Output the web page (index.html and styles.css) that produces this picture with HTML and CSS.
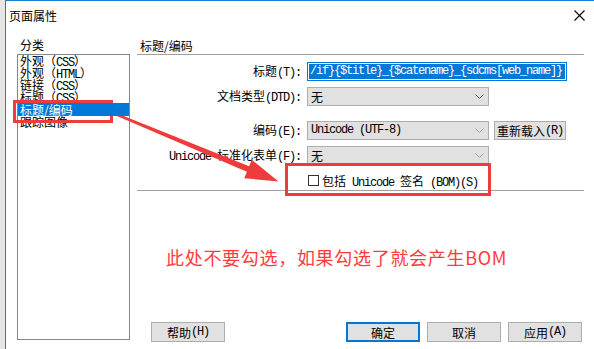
FILE: index.html
```html
<!DOCTYPE html>
<html lang="zh-CN">
<head>
<meta charset="utf-8">
<title>页面属性</title>
<link rel="stylesheet" href="styles.css">
</head>
<body>
<div class="screen">
  <div class="dialog">
    <div class="titlebar">
      <span class="title">页面属性</span>
      <svg class="close" width="11" height="11" viewBox="0 0 11 11"><path d="M0.5 0.5 L10.5 10.5 M10.5 0.5 L0.5 10.5" stroke="#000" stroke-width="1.1" fill="none"/></svg>
    </div>
    <div class="main">
      <div class="cat">
        <div class="cat-label">分类</div>
        <ul class="list">
          <li>外观（<span class="en">CSS</span>）</li>
          <li>外观（<span class="en">HTML</span>）</li>
          <li>链接（<span class="en">CSS</span>）</li>
          <li>标题（<span class="en">CSS</span>）</li>
          <li class="selected">标题/编码</li>
          <li>跟踪图像</li>
        </ul>
      </div>
      <div class="panel">
        <div class="panel-head">标题/编码</div>
        <div class="row r1">
          <span class="label">标题<span class="en">(T):</span></span>
          <div class="input"><span class="sel en">/if}{$title}_{$catename}_{sdcms[web_name]}</span></div>
        </div>
        <div class="row r2">
          <span class="label">文档类型<span class="en">(DTD):</span></span>
          <div class="select"><span>无</span><svg class="chev" width="9" height="5" viewBox="0 0 9 5"><path d="M0.5 0.5 L4.5 4.5 L8.5 0.5" stroke="#606060" fill="none"/></svg></div>
        </div>
        <div class="row r3">
          <span class="label">编码<span class="en">(E):</span></span>
          <div class="select"><span class="en">Unicode (UTF-8)</span><svg class="chev" width="9" height="5" viewBox="0 0 9 5"><path d="M0.5 0.5 L4.5 4.5 L8.5 0.5" stroke="#a0a0a0" fill="none"/></svg></div>
          <div class="btn reload">重新载入<span class="en">(R)</span></div>
        </div>
        <div class="row r4">
          <span class="label"><span class="en">Unicode </span>标准化表单<span class="en">(F):</span></span>
          <div class="select"><span>无</span><svg class="chev" width="9" height="5" viewBox="0 0 9 5"><path d="M0.5 0.5 L4.5 4.5 L8.5 0.5" stroke="#a0a0a0" fill="none"/></svg></div>
        </div>
        <div class="check-row">
          <span class="box"></span>
          <span class="check-text">包括<span class="en"> Unicode </span>签名<span class="en"> (BOM)(S)</span></span>
        </div>
        <div class="rule"></div>
        <p class="note">此处不要勾选，如果勾选了就会产生BOM</p>
        <div class="buttons">
          <div class="btn help">帮助<span class="en">(H)</span></div>
          <div class="spacer"></div>
          <div class="btn primary">确定</div>
          <div class="btn">取消</div>
          <div class="btn last">应用<span class="en">(A)</span></div>
        </div>
      </div>
    </div>
  </div>
  <div class="mark mark-list"></div>
  <div class="mark mark-check"></div>
  <svg class="arrow" width="594" height="349" viewBox="0 0 594 349">
    <polygon points="115,112.5 249.1,166.2 251.8,159.8 278.5,181.5 244.2,178.2 246.9,171.8 114.5,115" fill="#ee3b3b"/>
  </svg>
</div>
</body>
</html>
```

FILE: styles.css
```css
html, body {
  margin: 0;
  padding: 0;
}

body {
  width: 594px;
  height: 349px;
  overflow: hidden;
  background: #ffffff;
  font-family: "Noto Sans CJK SC", sans-serif;
  font-size: 12px;
  color: #000;
}

.en {
  font-family: "Liberation Mono", monospace;
  font-size: 12px;
  letter-spacing: -1.2px;
  white-space: pre;
}

.screen {
  position: relative;
  display: flex;
  height: 349px;
  box-sizing: border-box;
  padding-left: 5px;
  background: #e6e6e6;
}

.dialog {
  flex: 1;
  display: flex;
  flex-direction: column;
  background: #ffffff;
  border-left: 1px solid #1a7fd4;
  border-top: 1px solid #1a7fd4;
}

.titlebar {
  height: 29px;
  display: flex;
  align-items: center;
  justify-content: space-between;
  padding: 0 9px 0 3px;
}

.title {
  line-height: 14px;
}

.main {
  display: flex;
  height: 305px;
  padding: 7px 10px 0 11px;
}

.cat {
  width: 113px;
  flex: none;
}

.cat-label {
  line-height: 16px;
  height: 16px;
  padding-left: 3px;
  margin-bottom: 1px;
}

.list {
  margin: 0;
  padding: 0;
  list-style: none;
  height: 286px;
  box-sizing: border-box;
  border: 1px solid #828790;
  overflow: hidden;
}

.list li {
  height: 12px;
  line-height: 12px;
  padding-left: 2px;
  white-space: nowrap;
}

.list li.selected {
  position: relative;
  z-index: 1;
  height: 13px;
  line-height: 13px;
  background: #0078d7;
  color: #ffffff;
}

.panel {
  flex: 1;
  margin-left: 7px;
  display: flex;
  flex-direction: column;
}

.panel-head {
  height: 16px;
  line-height: 16px;
  padding: 1px 0 0 3px;
  border-bottom: 1px solid #a0a0a0;
}

.row {
  display: flex;
  align-items: center;
  height: 19px;
}

.r1 { margin-top: 7px; }
.r2 { margin-top: 6px; }
.r3 { margin-top: 15px; }
.r4 { margin-top: 6px; }

.label {
  width: 164px;
  margin-right: 6px;
  text-align: right;
  white-space: nowrap;
  line-height: 19px;
}

.input {
  width: 260px;
  height: 19px;
  box-sizing: border-box;
  border: 1px solid #0078d7;
  padding: 1px;
  background: #fff;
  overflow: hidden;
}

.input .sel {
  display: block;
  height: 15px;
  line-height: 15px;
  padding-left: 1px;
  background: #0078d7;
  color: #ffffff;
  overflow: hidden;
}

.select {
  width: 182px;
  height: 19px;
  box-sizing: border-box;
  border: 1px solid #adadad;
  background: #e1e1e1;
  display: flex;
  align-items: center;
  justify-content: space-between;
  padding: 0 4px 0 3px;
  line-height: 17px;
}

.btn {
  height: 19px;
  box-sizing: border-box;
  border: 1px solid #adadad;
  background: #e1e1e1;
  display: flex;
  align-items: center;
  justify-content: center;
  white-space: nowrap;
}

.reload {
  width: 72px;
  margin-left: 5px;
}

.check-row {
  display: flex;
  align-items: center;
  height: 19px;
  margin-top: 6px;
}

.box {
  width: 11px;
  height: 11px;
  box-sizing: border-box;
  border: 1px solid #333333;
  background: #fff;
  margin-left: 171px;
}

.check-text {
  margin-left: 3px;
  white-space: nowrap;
}

.rule {
  height: 0;
  border-top: 1px solid #a0a0a0;
}

.note {
  margin: 54px 0 0 29px;
  line-height: 24px;
  font-size: 18px;
  letter-spacing: 0.7px;
  color: #ff3b3b;
  white-space: nowrap;
}

.buttons {
  margin-top: auto;
  display: flex;
  gap: 7px;
  height: 20px;
}

.buttons .btn {
  width: 74px;
  height: 20px;
}

.buttons .help {
  margin-left: 14px;
}

.buttons .spacer {
  flex: 1;
}

.buttons .primary {
  border: 2px solid #0078d7;
}

.buttons .last {
  margin-right: 2px;
}

.mark {
  position: absolute;
  box-sizing: border-box;
  border: 3px solid #ec3c3c;
}

.mark-list {
  left: 13px;
  top: 100px;
  width: 100px;
  height: 23px;
}

.mark-check {
  left: 285px;
  top: 163px;
  width: 206px;
  height: 33px;
}

.arrow {
  position: absolute;
  left: 0;
  top: 0;
  pointer-events: none;
}
```
